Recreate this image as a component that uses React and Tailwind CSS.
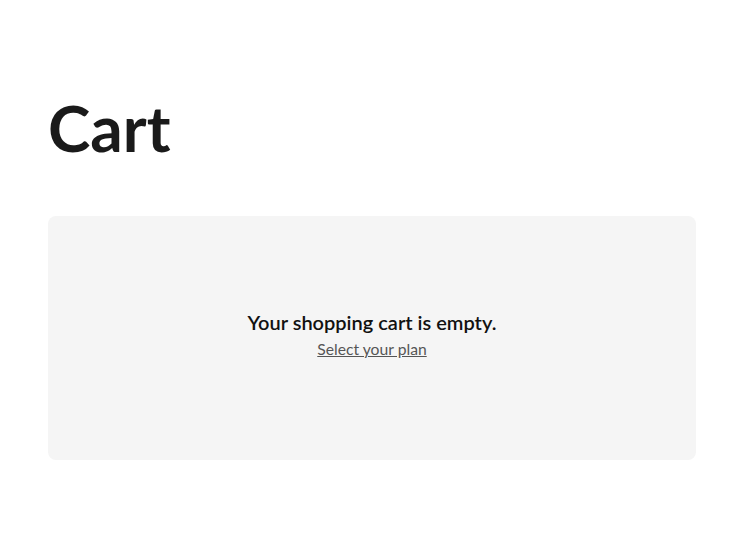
import React from 'react';

export default function App() {
  return (
    <div className="min-h-screen bg-white px-12 pt-24 font-['Lato',sans-serif] text-[#1a1a1a]">
      <h1 className="text-[64px] font-bold leading-none">Cart</h1>

      <div className="mt-14 flex h-[244px] flex-col items-center justify-center rounded-lg bg-[#f5f5f5] pb-2">
        <p className="text-xl font-semibold leading-7 text-[#111]">Your shopping cart is empty.</p>
        <a href="#" className="mt-px text-[15.7px] leading-6 text-[#555] underline">
          Select your plan
        </a>
      </div>
    </div>
  );
}
